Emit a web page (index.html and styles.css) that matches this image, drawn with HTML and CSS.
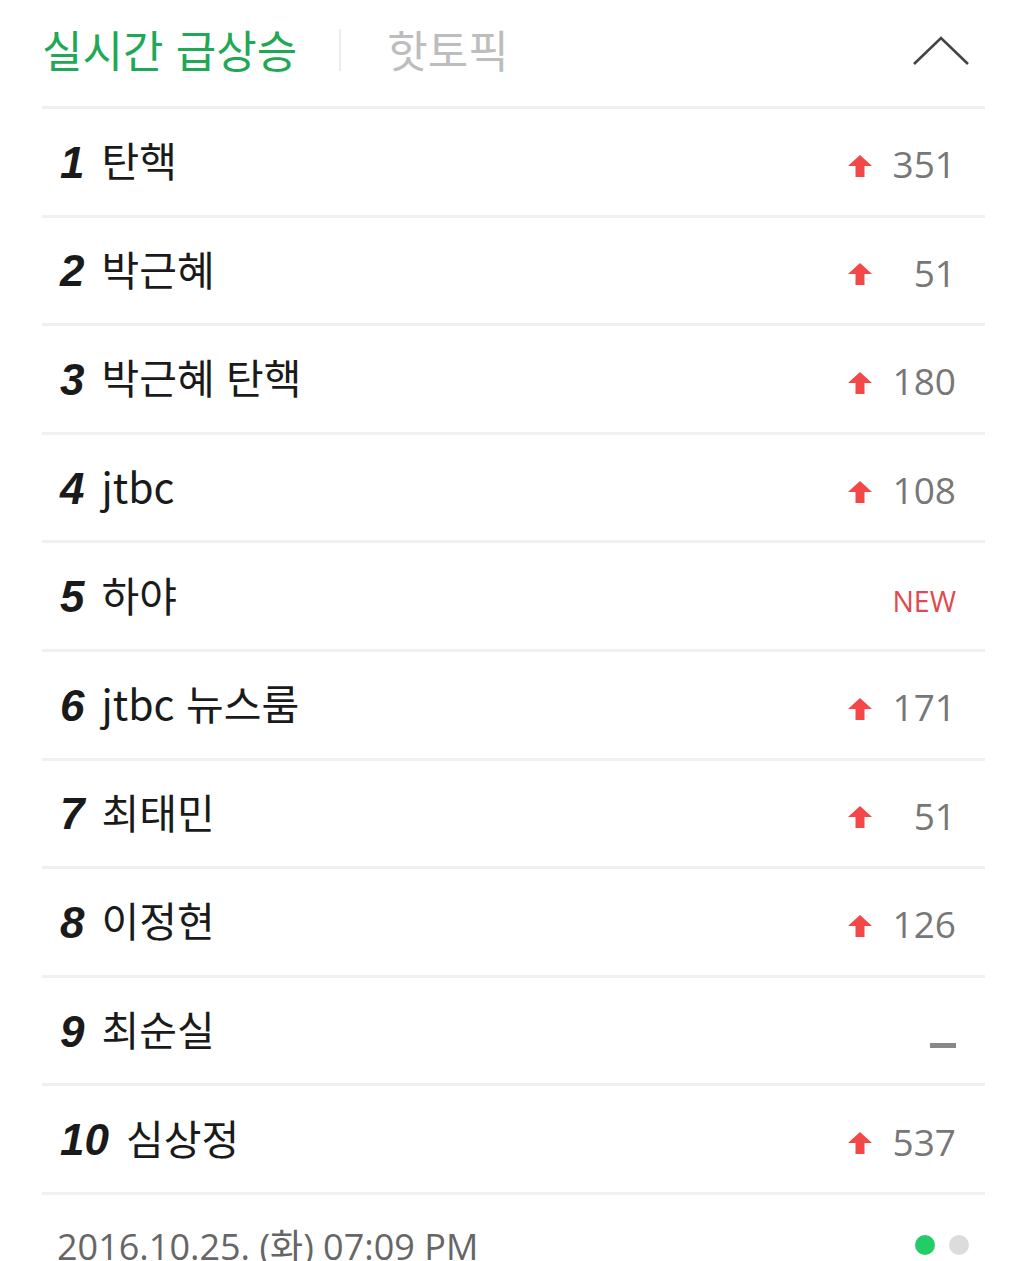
FILE: index.html
```html
<!DOCTYPE html>
<html lang="ko">
<head>
<meta charset="utf-8">
<link rel="stylesheet" href="styles.css">
</head>
<body>
<div class="panel">
  <div class="tabs">
    <span class="tab tab-active">실시간 급상승</span>
    <span class="tab-divider"></span>
    <span class="tab">핫토픽</span>
    <svg class="chevron" width="56" height="30" viewBox="0 0 56 30"><polyline points="1,28 28,2 55,28" fill="none" stroke="#444" stroke-width="2.6"/></svg>
  </div>
  <ol class="list">
    <li class="row"><span class="rank">1</span><span class="word">탄핵</span><span class="change"><svg class="up" viewBox="0 0 24 22"><polygon points="12,0 24,11 16.5,11 16.5,22 7.5,22 7.5,11 0,11" fill="#f44848"/></svg><span class="num">351</span></span></li>
    <li class="row"><span class="rank">2</span><span class="word">박근혜</span><span class="change"><svg class="up" viewBox="0 0 24 22"><polygon points="12,0 24,11 16.5,11 16.5,22 7.5,22 7.5,11 0,11" fill="#f44848"/></svg><span class="num">51</span></span></li>
    <li class="row"><span class="rank">3</span><span class="word">박근혜 탄핵</span><span class="change"><svg class="up" viewBox="0 0 24 22"><polygon points="12,0 24,11 16.5,11 16.5,22 7.5,22 7.5,11 0,11" fill="#f44848"/></svg><span class="num">180</span></span></li>
    <li class="row"><span class="rank">4</span><span class="word">jtbc</span><span class="change"><svg class="up" viewBox="0 0 24 22"><polygon points="12,0 24,11 16.5,11 16.5,22 7.5,22 7.5,11 0,11" fill="#f44848"/></svg><span class="num">108</span></span></li>
    <li class="row"><span class="rank">5</span><span class="word">하야</span><span class="change"><span class="new">NEW</span></span></li>
    <li class="row"><span class="rank">6</span><span class="word">jtbc 뉴스룸</span><span class="change"><svg class="up" viewBox="0 0 24 22"><polygon points="12,0 24,11 16.5,11 16.5,22 7.5,22 7.5,11 0,11" fill="#f44848"/></svg><span class="num">171</span></span></li>
    <li class="row"><span class="rank">7</span><span class="word">최태민</span><span class="change"><svg class="up" viewBox="0 0 24 22"><polygon points="12,0 24,11 16.5,11 16.5,22 7.5,22 7.5,11 0,11" fill="#f44848"/></svg><span class="num">51</span></span></li>
    <li class="row"><span class="rank">8</span><span class="word">이정현</span><span class="change"><svg class="up" viewBox="0 0 24 22"><polygon points="12,0 24,11 16.5,11 16.5,22 7.5,22 7.5,11 0,11" fill="#f44848"/></svg><span class="num">126</span></span></li>
    <li class="row"><span class="rank">9</span><span class="word">최순실</span><span class="change"><span class="same"></span></span></li>
    <li class="row"><span class="rank">10</span><span class="word">심상정</span><span class="change"><svg class="up" viewBox="0 0 24 22"><polygon points="12,0 24,11 16.5,11 16.5,22 7.5,22 7.5,11 0,11" fill="#f44848"/></svg><span class="num">537</span></span></li>
  </ol>
  <div class="footer">
    <span class="date">2016.10.25. (화) 07:09 PM</span>
    <span class="dots"><span class="dot dot-on"></span><span class="dot"></span></span>
  </div>
</div>
</body>
</html>
```

FILE: styles.css
```css
html, body {
  margin: 0;
  padding: 0;
  background: #fff;
}
body {
  font-family: "Noto Sans CJK KR", "Noto Sans", sans-serif;
  width: 1024px;
  height: 1261px;
  overflow: hidden;
}
.panel {
  margin-left: 42px;
  width: 943px;
}
.tabs {
  height: 106px;
  display: flex;
  align-items: center;
  border-bottom: 3px solid #f0f0f0;
}
.tab {
  font-size: 44px;
  color: #bdbdbd;
  line-height: 1;
  margin-top: -8px;
}
.tab-active {
  color: #1fa855;
}
.tab-divider {
  width: 2px;
  height: 42px;
  background: #ececec;
  margin: -6px 46px 0 42px;
}
.chevron {
  margin-left: auto;
  margin-right: 16px;
  margin-top: -4px;
}
.list {
  list-style: none;
  margin: 0;
  padding: 0;
}
.row {
  height: 105.6px;
  border-bottom: 3px solid #f0f0f0;
  display: flex;
  align-items: center;
  padding-left: 18px;
  padding-right: 29px;
}
.rank {
  font-family: "Liberation Sans", sans-serif;
  font-weight: bold;
  font-style: italic;
  font-size: 44px;
  color: #1a1a1a;
  margin-right: 17px;
  margin-top: 2px;
}
.word {
  font-size: 41px;
  color: #1a1a1a;
  line-height: 1;
  margin-top: -4px;
}
.change {
  margin-left: auto;
  display: flex;
  align-items: center;
}
.up {
  width: 24px;
  height: 22px;
  margin-top: 8px;
}
.num {
  font-family: "Open Sans", sans-serif;
  font-size: 37px;
  color: #777;
  width: 84px;
  text-align: right;
  margin-top: 4px;
}
.new {
  font-family: "Open Sans", sans-serif;
  font-size: 28.5px;
  color: #e04a4e;
  margin-top: 10px;
}
.same {
  display: block;
  width: 26px;
  height: 5px;
  background: #888;
  margin-top: 30px;
}
.footer {
  display: flex;
  align-items: center;
  padding-left: 15px;
  padding-right: 16px;
  margin-top: 34px;
}
.date {
  font-family: "Open Sans", "Noto Sans CJK KR", sans-serif;
  font-size: 36px;
  color: #666;
  line-height: 1;
}
.dots {
  margin-left: auto;
  display: flex;
  gap: 14px;
  margin-top: -4px;
}
.dot {
  width: 20px;
  height: 20px;
  border-radius: 50%;
  background: #dcdcdc;
}
.dot-on {
  background: #22cc66;
}
```
